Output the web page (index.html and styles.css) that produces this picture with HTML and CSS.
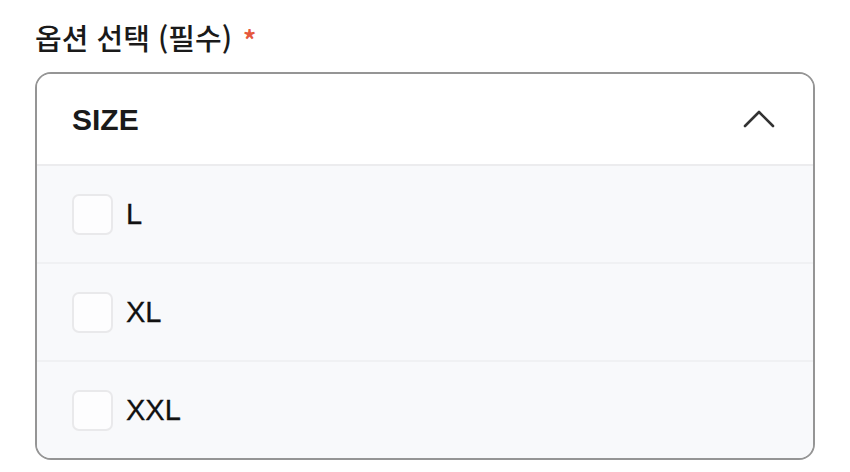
FILE: index.html
```html
<!DOCTYPE html>
<html lang="ko">
<head>
    <meta charset="UTF-8">
    <meta name="viewport" content="width=device-width, initial-scale=1.0">
    <title>옵션 선택</title>
    <link rel="stylesheet" href="styles.css">
</head>
<body>

    <!-- Option Title -->
    <div class="option-title">
        <span>옵션 선택 (필수)</span>
        <span class="required">*</span>
    </div>

    <!-- Size Dropdown -->
    <div class="option-box">
        <div class="option-header">
            <span class="option-name">SIZE</span>
            <svg class="chevron" width="32" height="20" viewBox="0 0 32 20">
                <path d="M2 18 L16 4 L30 18" fill="none" stroke="#333" stroke-width="2.6" stroke-linecap="round" stroke-linejoin="round"/>
            </svg>
        </div>
        <label class="option-row">
            <span class="check"></span>
            <span class="option-label">L</span>
        </label>
        <label class="option-row">
            <span class="check"></span>
            <span class="option-label">XL</span>
        </label>
        <label class="option-row">
            <span class="check"></span>
            <span class="option-label">XXL</span>
        </label>
    </div>

</body>
</html>
```

FILE: styles.css
```css
body {
    font-family: "Liberation Sans", "Noto Sans CJK KR", Arial, sans-serif;
    margin: 0;
    padding: 15px 35px 0 35px;
    background: #fff;
    color: #1a1a1a;
}

/* Title */
.option-title {
    display: flex;
    align-items: center;
    gap: 11px;
    font-family: "Noto Sans CJK KR", sans-serif;
    font-size: 29px;
    font-weight: 500;
    height: 44px;
    margin-bottom: 13px;
}

.required {
    color: #e5583d;
    font-size: 26px;
    font-weight: 700;
    margin-top: 2px;
}

/* Dropdown box */
.option-box {
    width: 776px;
    border: 2px solid #959595;
    border-radius: 16px;
    overflow: hidden;
}

.option-header {
    display: flex;
    justify-content: space-between;
    align-items: center;
    height: 90px;
    padding: 0 38px 0 35px;
    background: #fff;
    border-bottom: 2px solid #ececee;
}

.option-name {
    font-size: 30px;
    font-weight: 700;
    margin-top: 2px;
}

.chevron {
    margin-top: -2px;
}

.option-row {
    display: flex;
    align-items: center;
    gap: 13px;
    height: 96px;
    padding-left: 35px;
    background: #f8f9fb;
    border-bottom: 2px solid #f0f1f3;
    cursor: pointer;
}

.option-row:last-child {
    border-bottom: none;
}

.check {
    width: 37px;
    height: 37px;
    border: 2px solid #e9e9eb;
    border-radius: 7px;
    background: #fdfdfe;
}

.option-label {
    font-size: 29px;
    font-weight: 500;
    color: #111;
    -webkit-text-stroke: 0.3px #111;
}
```
